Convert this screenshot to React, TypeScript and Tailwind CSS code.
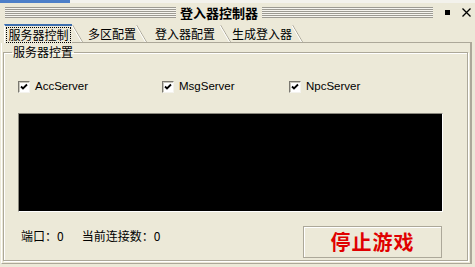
import React from 'react'

const tabs = [
  { label: '多区配置', box: 'w-[53px] pl-[5px]' },
  { label: '登入器配置', box: 'w-[73px] pl-[8px]' },
  { label: '生成登入器', box: 'w-[61px] pl-[1px]' },
]

const servers = [
  { name: 'AccServer', box: 'w-[144px]' },
  { name: 'MsgServer', box: 'w-[127px]' },
  { name: 'NpcServer', box: 'w-[100px]' },
]

function Stripes() {
  return (
    <div className="flex-1 h-[11px] bg-[repeating-linear-gradient(to_bottom,#9c9a92_0px,#9c9a92_1px,#f6f5ef_1px,#f6f5ef_2px)]" />
  )
}

function TabSlant() {
  return (
    <svg width="11" height="17" viewBox="0 0 11 17" className="shrink-0">
      <line x1="0.5" y1="0" x2="10.5" y2="17" stroke="#aca899" strokeWidth="1" />
      <line x1="-0.5" y1="0" x2="9.5" y2="17" stroke="#ffffff" strokeWidth="1" />
    </svg>
  )
}

function CheckBox() {
  return (
    <div className="w-[12px] h-[12px] bg-white border border-t-[#7a7870] border-l-[#7a7870] border-b-[#f4f3ee] border-r-[#f4f3ee] shadow-[inset_1px_1px_0_#c8c6bc] flex items-center justify-center">
      <svg width="8" height="8" viewBox="0 0 8 8">
        <path d="M1 3.5 L3 5.5 L7 1.5" fill="none" stroke="#000" strokeWidth="1.8" />
      </svg>
    </div>
  )
}

export default function App() {
  return (
    <div className="w-[475px] h-[267px] overflow-hidden bg-[#ECE9D8] flex flex-col font-['Liberation_Sans','Noto_Sans_CJK_SC',sans-serif] text-black">
      {/* leftover strip from window behind */}
      <div className="h-[3px] flex">
        <div className="w-[70px] bg-[#4d7fc8]" />
        <div className="flex-1 bg-[#f3f2ec]" />
      </div>

      {/* title bar */}
      <div className="h-[19px] flex items-center pl-[5px]">
        <Stripes />
        <div className="mx-[4px] text-[13px] leading-[13px] font-bold font-['Noto_Sans_CJK_SC',sans-serif]">登入器控制器</div>
        <Stripes />
        <div className="w-[42px] flex items-center pl-[12px]">
          <div className="w-[5px] h-[5px] bg-black" />
          <svg width="9" height="9" viewBox="0 0 9 9" className="ml-[12px]">
            <path d="M0.5 0.5 L8.5 8.5 M8.5 0.5 L0.5 8.5" stroke="#000" strokeWidth="1.3" />
          </svg>
        </div>
      </div>

      {/* tabs */}
      <div className="h-[21px] flex items-end pl-[4px] text-[12px] leading-[12px] whitespace-nowrap font-['Noto_Sans_CJK_SC',sans-serif]">
        <div className="w-[68px] h-[19px] shrink-0 border-t-[2px] border-t-[#3d6fb0] border-l border-l-white flex items-center justify-center">
          <span className="outline-1 outline-dotted outline-black px-[1px] py-[1px]">服务器控制</span>
        </div>
        <div className="flex items-end border-b border-b-[#aca899] flex-1 mr-[3px]">
          <TabSlant />
          {tabs.map((t) => (
            <div key={t.label} className="flex items-end shrink-0">
              <div className={`${t.box} h-[17px] flex items-center shrink-0`}>{t.label}</div>
              <TabSlant />
            </div>
          ))}
        </div>
      </div>

      {/* panel */}
      <div className="ml-[1px] w-[471px] h-[221px] border-l border-l-white border-r-[2px] border-r-[#aca899] border-b border-b-[#aca899] pt-[2px] pl-[1px] pr-[2px]">
        <fieldset className="h-[216px] border border-[#aca899] shadow-[inset_1px_1px_0_#fff,1px_1px_0_#fff] px-0">
          <legend className="ml-[8px] px-[1px] text-[12px] leading-[14px] font-['Noto_Sans_CJK_SC',sans-serif]">服务器控置</legend>

          <div className="mt-[21px] ml-[14px] flex items-center h-[13px] text-[11.5px]">
            {servers.map((s) => (
              <label key={s.name} className={`${s.box} flex items-center gap-[5px]`}>
                <CheckBox />
                <span>{s.name}</span>
              </label>
            ))}
          </div>

          <div className="mt-[20px] ml-[14px] w-[425px] h-[99px] bg-black border border-t-[#8a887e] border-l-[#8a887e] border-b-white border-r-white" />

          <div className="mt-[14px] flex items-start">
            <div className="ml-[17px] mt-[4px] flex text-[12px] leading-[12px] font-['Noto_Sans_CJK_SC',sans-serif]">
              <span>端口：0</span>
              <span className="ml-[18px]">当前连接数：0</span>
            </div>
            <button className="ml-auto mr-[25px] w-[139px] h-[32px] bg-[#ECE9D8] border border-[#aca899] shadow-[inset_1px_1px_0_#fff] text-[#e00000] text-[20px] leading-[20px] font-bold font-['Noto_Sans_CJK_SC',serif] tracking-[1px]">
              停止游戏
            </button>
          </div>
        </fieldset>
      </div>
    </div>
  )
}
